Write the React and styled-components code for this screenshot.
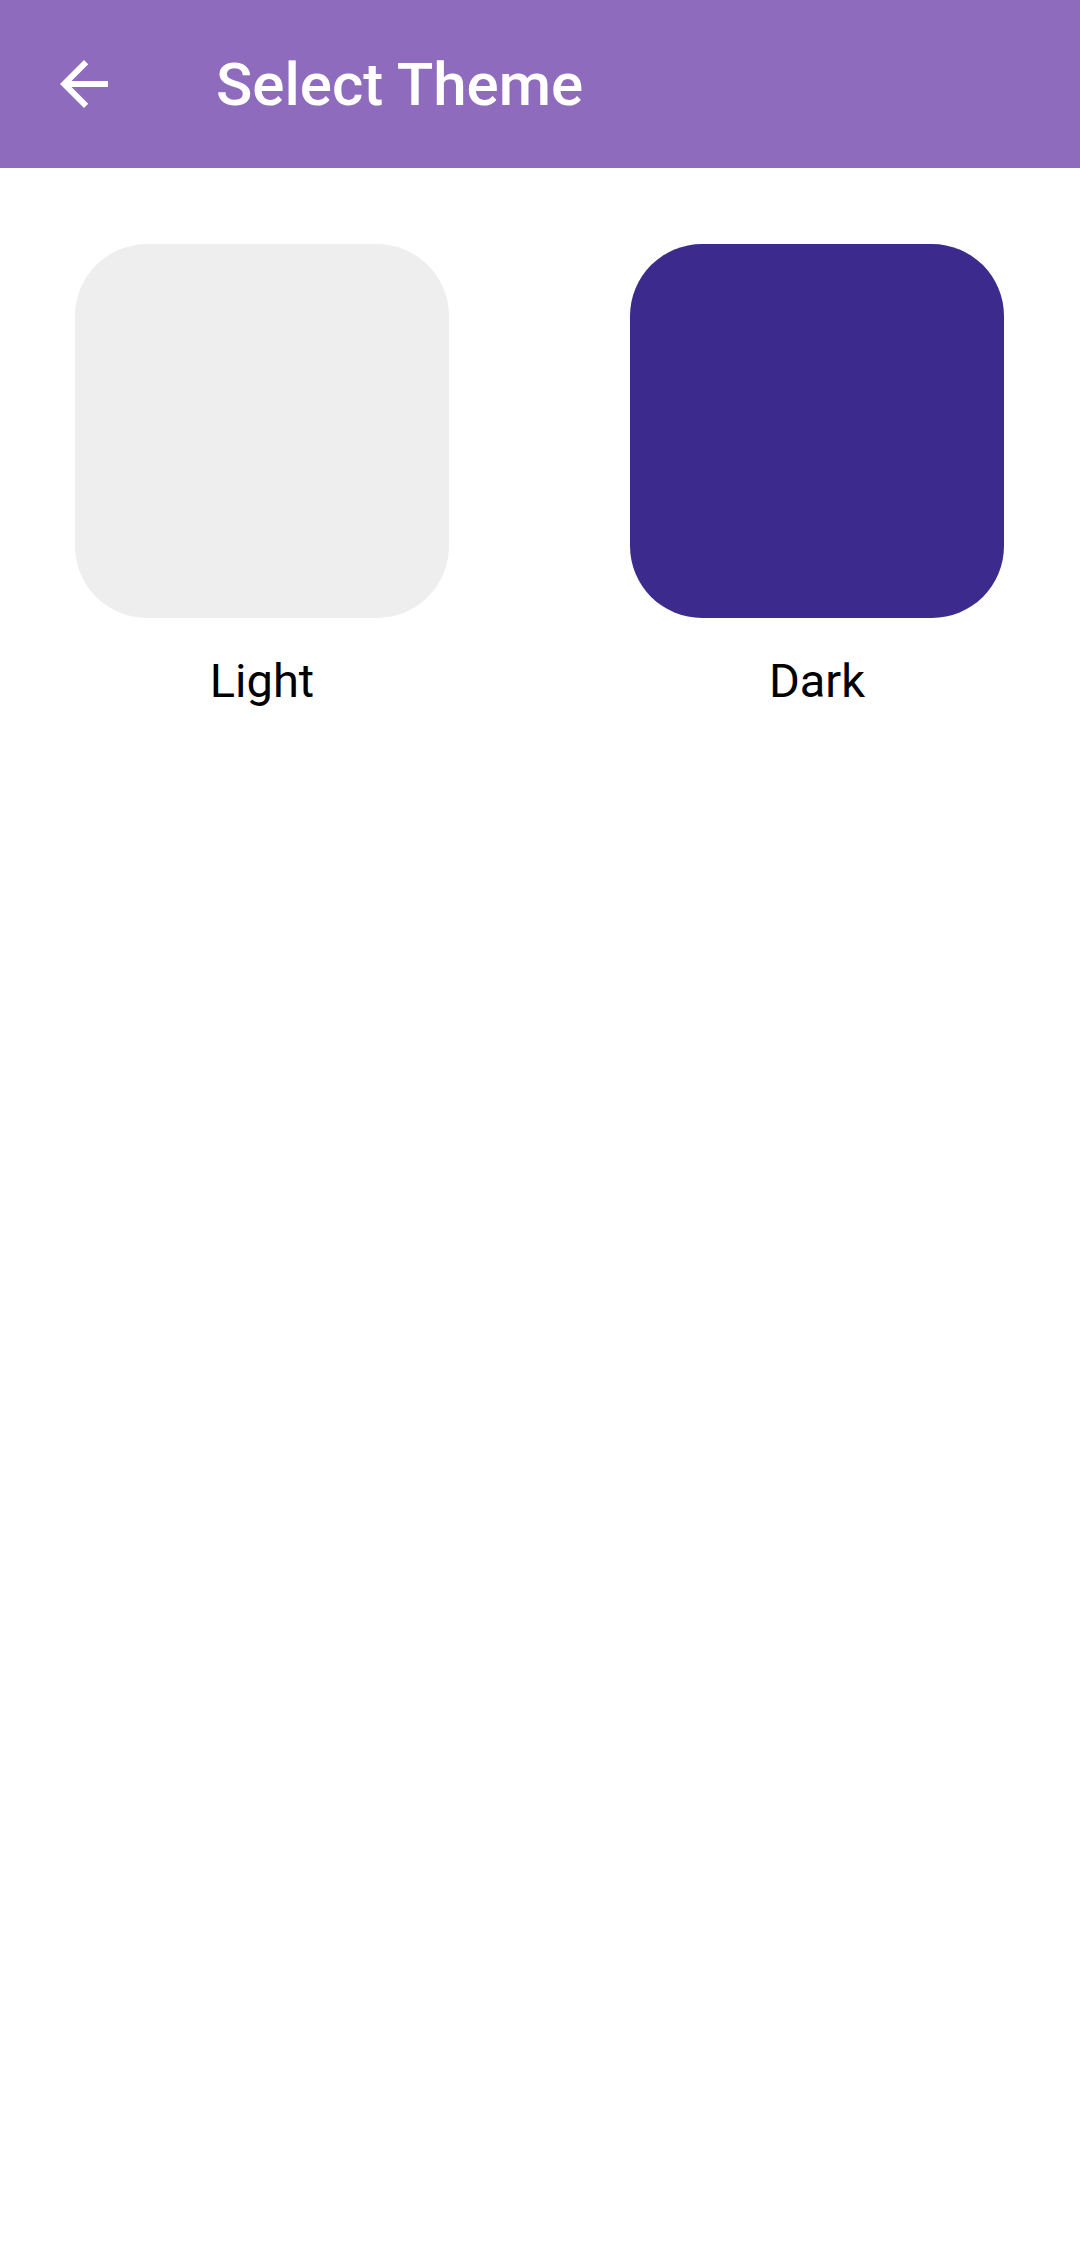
import React from 'react';
import styled, {createGlobalStyle} from "styled-components"

const GlobalStyle = createGlobalStyle`
body{
    margin: 0;
    background: #ffffff;
    font-family: Roboto, "Noto Sans", sans-serif;
}
`;

const themes = [
    {name: "Light", color: "#eeeeee"},
    {name: "Dark", color: "#3c2b8c"},
];

function BackArrow(){
    return(
        <svg width="72" height="72" viewBox="0 0 24 24">
            <path fill="#ffffff" d="M20 11H7.83l5.59-5.59L12 4l-8 8 8 8 1.41-1.41L7.83 13H20v-2z"/>
        </svg>
    )
}

export default function App(){
    return(
        <Page>
            <GlobalStyle />
            <Toolbar>
                <NavButton aria-label="Back">
                    <BackArrow />
                </NavButton>
                <Title>Select Theme</Title>
            </Toolbar>
            <ThemeGrid>
                {themes.map(t => (
                    <ThemeItem key={t.name}>
                        <Swatch color={t.color} />
                        <Label>{t.name}</Label>
                    </ThemeItem>
                ))}
            </ThemeGrid>
        </Page>
    )
}


// STYLED COMPONENT
const Page = styled.div`
    min-height: 2250px;
    background: #ffffff;
`;

const Toolbar = styled.header`
    height: 168px;
    background: #8f6bbe;
    display: flex;
    align-items: center;
    padding-left: 48px;
    box-sizing: border-box;
`;

const NavButton = styled.button`
    width: 72px;
    height: 72px;
    padding: 0;
    border: none;
    background: transparent;
    display: flex;
    align-items: center;
    justify-content: center;
    cursor: pointer;
`;

const Title = styled.h1`
    margin: 0 0 0 96px;
    color: #ffffff;
    font-family: Roboto, sans-serif;
    font-weight: 500;
    font-size: 60px;
    letter-spacing: 0;
`;

const ThemeGrid = styled.div`
    display: grid;
    grid-template-columns: 374px 374px;
    justify-content: space-between;
    padding: 76px 76px 0 75px;
`;

const ThemeItem = styled.div`
    display: flex;
    flex-direction: column;
    align-items: center;
    cursor: pointer;
`;

const Swatch = styled.div`
    width: 374px;
    height: 374px;
    border-radius: 72px;
    background: ${p => p.color};
`;

const Label = styled.span`
    margin-top: 35px;
    font-family: Roboto, sans-serif;
    font-size: 47px;
    color: #000000;
`;
